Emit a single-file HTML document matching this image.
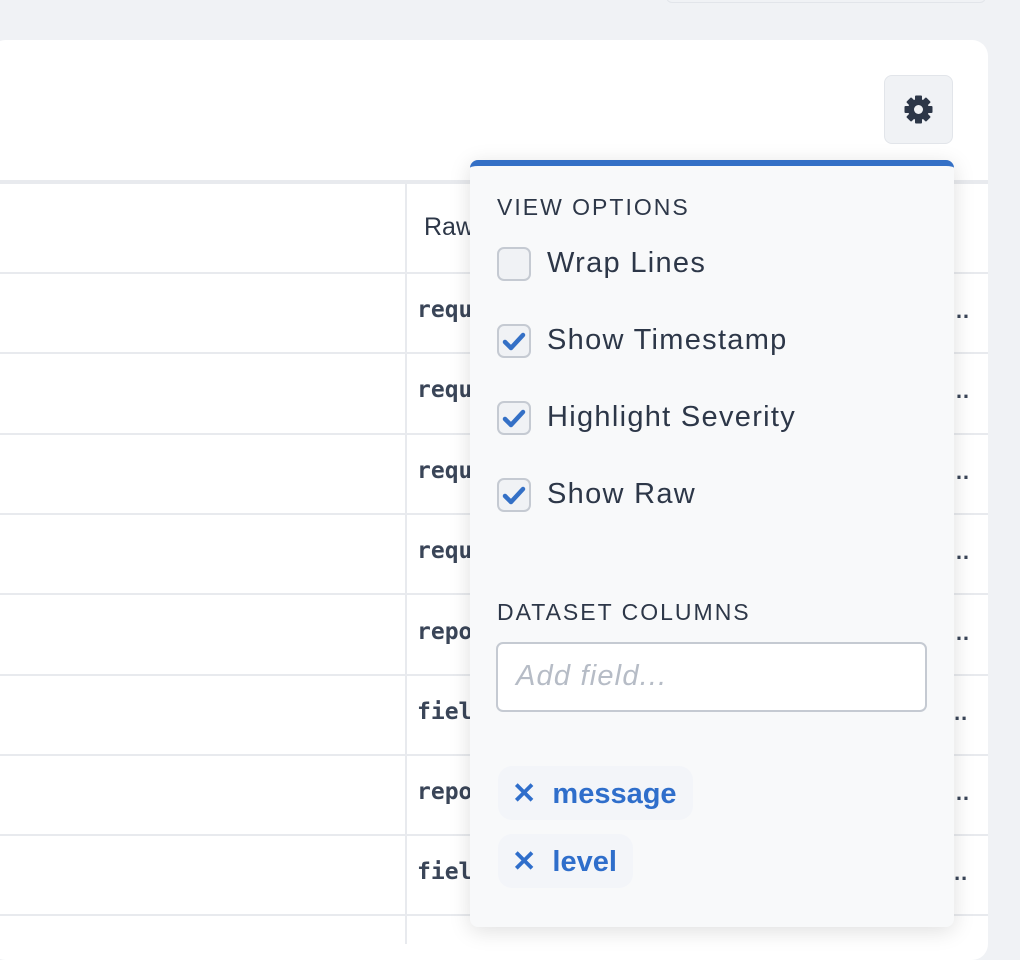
<!DOCTYPE html>
<html><head><style>
*{box-sizing:border-box;margin:0;padding:0}
body{width:1020px;height:940px;background:#f0f2f5;position:relative;overflow:hidden;font-family:"Liberation Sans",sans-serif;color:#2d3748}
.abs{position:absolute}
.card{left:-10px;top:40px;width:998px;height:920px;background:#fff;border-radius:16px}
.topbox{left:666px;top:-20px;width:320px;height:23px;border:1px solid #e2e5ea;border-radius:6px;background:#f0f2f5}
.gear{left:884px;top:75px;width:69px;height:69px;border:1px solid #e2e5ea;border-radius:8px;background:#f0f2f5}
.hline{left:0;width:988px;height:2px;background:#e8eaee}
.vline{left:405px;top:184px;width:2px;height:760px;background:#e8eaee}
.mono{font-family:"DejaVu Sans Mono","Liberation Mono",monospace;font-weight:bold;font-size:23px;color:#3a4558}
.dots{left:948px;font-weight:bold;font-size:22px;color:#3a4558}
.pop{left:470px;top:160px;width:484px;height:767px;background:#f8f9fa;border-radius:8px;border-top:6px solid #3470c6;box-shadow:0 4px 22px rgba(0,0,0,.13)}
.h{font-size:23px;letter-spacing:2px;color:#2d3748}
.cb{left:497px;width:34px;height:34px;border:2px solid #c5cad2;border-radius:7px;background:#f0f2f5}
.lbl{left:547px;font-size:29px;letter-spacing:1.3px;color:#2d3748}
.inp{left:496px;top:642px;width:431px;height:70px;border:2px solid #c5cad2;border-radius:7px;background:#fff;font-style:italic;color:#b6bcc6;font-size:29px;letter-spacing:1.2px;padding:16px 18px}
.tag{left:498px;height:54px;border-radius:14px;background:#f3f5f9;color:#2f6ecb;font-size:29px;font-weight:bold;padding:10px 16px 0 14px}
</style></head><body>
<div class="abs topbox"></div>
<div class="abs card"></div>
<div class="abs gear"><svg width="69" height="69" viewBox="0 0 69 69" style="position:absolute;left:-1px;top:-1px"><g transform="translate(34.5 34.5)" fill="#2d3748"><g id="t"><rect x="-3.5" y="-14" width="7" height="6" rx="1"/></g><use href="#t" transform="rotate(45)"/><use href="#t" transform="rotate(90)"/><use href="#t" transform="rotate(135)"/><use href="#t" transform="rotate(180)"/><use href="#t" transform="rotate(225)"/><use href="#t" transform="rotate(270)"/><use href="#t" transform="rotate(315)"/><circle r="10.5"/><circle r="4.5" fill="#f0f2f5"/></g></svg></div>
<div class="abs hline" style="top:180px;height:4px"></div>
<div class="abs vline"></div>
<div class="abs" style="left:424px;top:213px;font-size:25px;color:#2d3748">Raw</div>
<div class="abs hline" style="top:272px"></div>
<div class="abs hline" style="top:352px"></div>
<div class="abs hline" style="top:433px"></div>
<div class="abs hline" style="top:513px"></div>
<div class="abs hline" style="top:593px"></div>
<div class="abs hline" style="top:674px"></div>
<div class="abs hline" style="top:754px"></div>
<div class="abs hline" style="top:834px"></div>
<div class="abs hline" style="top:914px"></div>
<div class="abs mono" style="left:417px;top:297px">requ</div><div class="abs dots" style="top:298px">…</div>
<div class="abs mono" style="left:417px;top:377px">requ</div><div class="abs dots" style="top:378px">…</div>
<div class="abs mono" style="left:417px;top:458px">requ</div><div class="abs dots" style="top:459px">…</div>
<div class="abs mono" style="left:417px;top:538px">requ</div><div class="abs dots" style="top:539px">…</div>
<div class="abs mono" style="left:417px;top:619px">repo</div><div class="abs dots" style="top:620px">…</div>
<div class="abs mono" style="left:417px;top:699px">fiel</div><div class="abs dots" style="left:940px;top:700px">/…</div>
<div class="abs mono" style="left:417px;top:779px">repo</div><div class="abs dots" style="top:780px">…</div>
<div class="abs mono" style="left:417px;top:859px">fiel</div><div class="abs dots" style="left:940px;top:860px">/…</div>
<div class="abs pop"></div>
<div class="abs h" style="left:497px;top:194px">VIEW OPTIONS</div>
<div class="abs cb" style="top:247px"></div><div class="abs lbl" style="top:247px">Wrap Lines</div>
<div class="abs cb" style="top:324px"><svg width="30" height="30" viewBox="0 0 30 30"><path d="M6 16 L12 22 L24 9" stroke="#3470c6" stroke-width="4.5" fill="none" stroke-linecap="round" stroke-linejoin="round"/></svg></div><div class="abs lbl" style="top:324px">Show Timestamp</div>
<div class="abs cb" style="top:401px"><svg width="30" height="30" viewBox="0 0 30 30"><path d="M6 16 L12 22 L24 9" stroke="#3470c6" stroke-width="4.5" fill="none" stroke-linecap="round" stroke-linejoin="round"/></svg></div><div class="abs lbl" style="top:401px">Highlight Severity</div>
<div class="abs cb" style="top:478px"><svg width="30" height="30" viewBox="0 0 30 30"><path d="M6 16 L12 22 L24 9" stroke="#3470c6" stroke-width="4.5" fill="none" stroke-linecap="round" stroke-linejoin="round"/></svg></div><div class="abs lbl" style="top:478px">Show Raw</div>
<div class="abs h" style="left:497px;top:599px">DATASET COLUMNS</div>
<div class="abs inp">Add field...</div>
<div class="abs tag" style="top:766px">✕&nbsp; message</div>
<div class="abs tag" style="top:834px">✕&nbsp; level</div>
</body></html>
